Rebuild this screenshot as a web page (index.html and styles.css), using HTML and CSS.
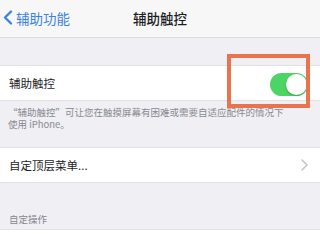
FILE: index.html
```html
<!DOCTYPE html>
<html lang="zh-CN">
<head>
<meta charset="utf-8">
<link rel="stylesheet" href="styles.css">
</head>
<body>
<div class="screen">
  <header class="nav">
    <div class="back">
      <svg class="back-icon" width="10" height="15" viewBox="0 0 10 15"><path d="M8 1.5 L2 7.5 L8 13.5" fill="none" stroke="#3a82e0" stroke-width="2.3" stroke-linecap="round" stroke-linejoin="round"/></svg>
      <span>辅助功能</span>
    </div>
    <div class="title">辅助触控</div>
  </header>
  <div class="gap1"></div>
  <div class="row toggle-row">
    <span class="label">辅助触控</span>
    <span class="switch"><span class="knob"></span></span>
  </div>
  <p class="footer">“辅助触控”可让您在触摸屏幕有困难或需要自适应配件的情况下使用 iPhone。</p>
  <div class="row menu-row">
    <span class="label">自定顶层菜单...</span>
    <svg class="chevron" width="7" height="12" viewBox="0 0 7 12"><path d="M1 1 L6 6 L1 11" fill="none" stroke="#c4c4c9" stroke-width="1.6" stroke-linecap="round" stroke-linejoin="round"/></svg>
  </div>
  <div class="section-head">自定操作</div>
  <div class="row last-row"></div>
  <div class="highlight"></div>
</div>
</body>
</html>
```
FILE: styles.css
```css
* { box-sizing: border-box; }
html, body { margin: 0; padding: 0; }
body {
  width: 320px;
  height: 240px;
  overflow: hidden;
  background: #efeff4;
  font-family: "Noto Sans CJK SC", "Noto Sans", sans-serif;
}
.screen {
  position: relative;
  width: 320px;
  height: 240px;
  display: flex;
  flex-direction: column;
}
.nav {
  height: 38px;
  flex: none;
  background: #f7f7f8;
  border-bottom: 1px solid #dcdce0;
  position: relative;
  display: flex;
  align-items: center;
}
.back {
  display: flex;
  align-items: center;
  gap: 3px;
  padding-left: 3px;
  color: #3a82e0;
  font-size: 13.5px;
  margin-top: -2px;
}
.title {
  position: absolute;
  left: 0;
  right: 0;
  text-align: center;
  font-size: 13.5px;
  font-weight: 500;
  color: #1d1d1f;
  margin-top: -2px;
}
.gap1 { height: 27px; flex: none; }
.row {
  background: #fff;
  border-top: 1px solid #e2e2e6;
  border-bottom: 1px solid #e2e2e6;
  display: flex;
  align-items: center;
  padding: 0 9px;
  flex: none;
}
.label { font-size: 11.5px; color: #1d1d1f; }
.toggle-row { height: 36px; justify-content: space-between; padding-right: 12px; }
.switch {
  width: 38px;
  height: 23px;
  border-radius: 12px;
  background: #4cd464;
  position: relative;
  margin-top: 2px;
}
.knob {
  position: absolute;
  right: 1px;
  top: 1px;
  width: 21px;
  height: 21px;
  border-radius: 50%;
  background: #fff;
  box-shadow: 0 1px 2px rgba(0,0,0,0.25);
}
.footer {
  margin: 0;
  padding: 5px 30px 0 8px;
  height: 46px;
  flex: none;
  font-size: 9.5px;
  line-height: 12px;
  color: #8a8a90;
}
.menu-row { height: 36px; justify-content: space-between; padding-right: 12px; }
.section-head {
  height: 46px;
  flex: none;
  font-size: 9.5px;
  color: #86868c;
  padding: 29px 0 0 9px;
}
.last-row { flex: 1; border-bottom: none; }
.highlight {
  position: absolute;
  left: 227px;
  top: 54px;
  width: 83px;
  height: 54px;
  border: 4px solid #e8734d;
}
```
